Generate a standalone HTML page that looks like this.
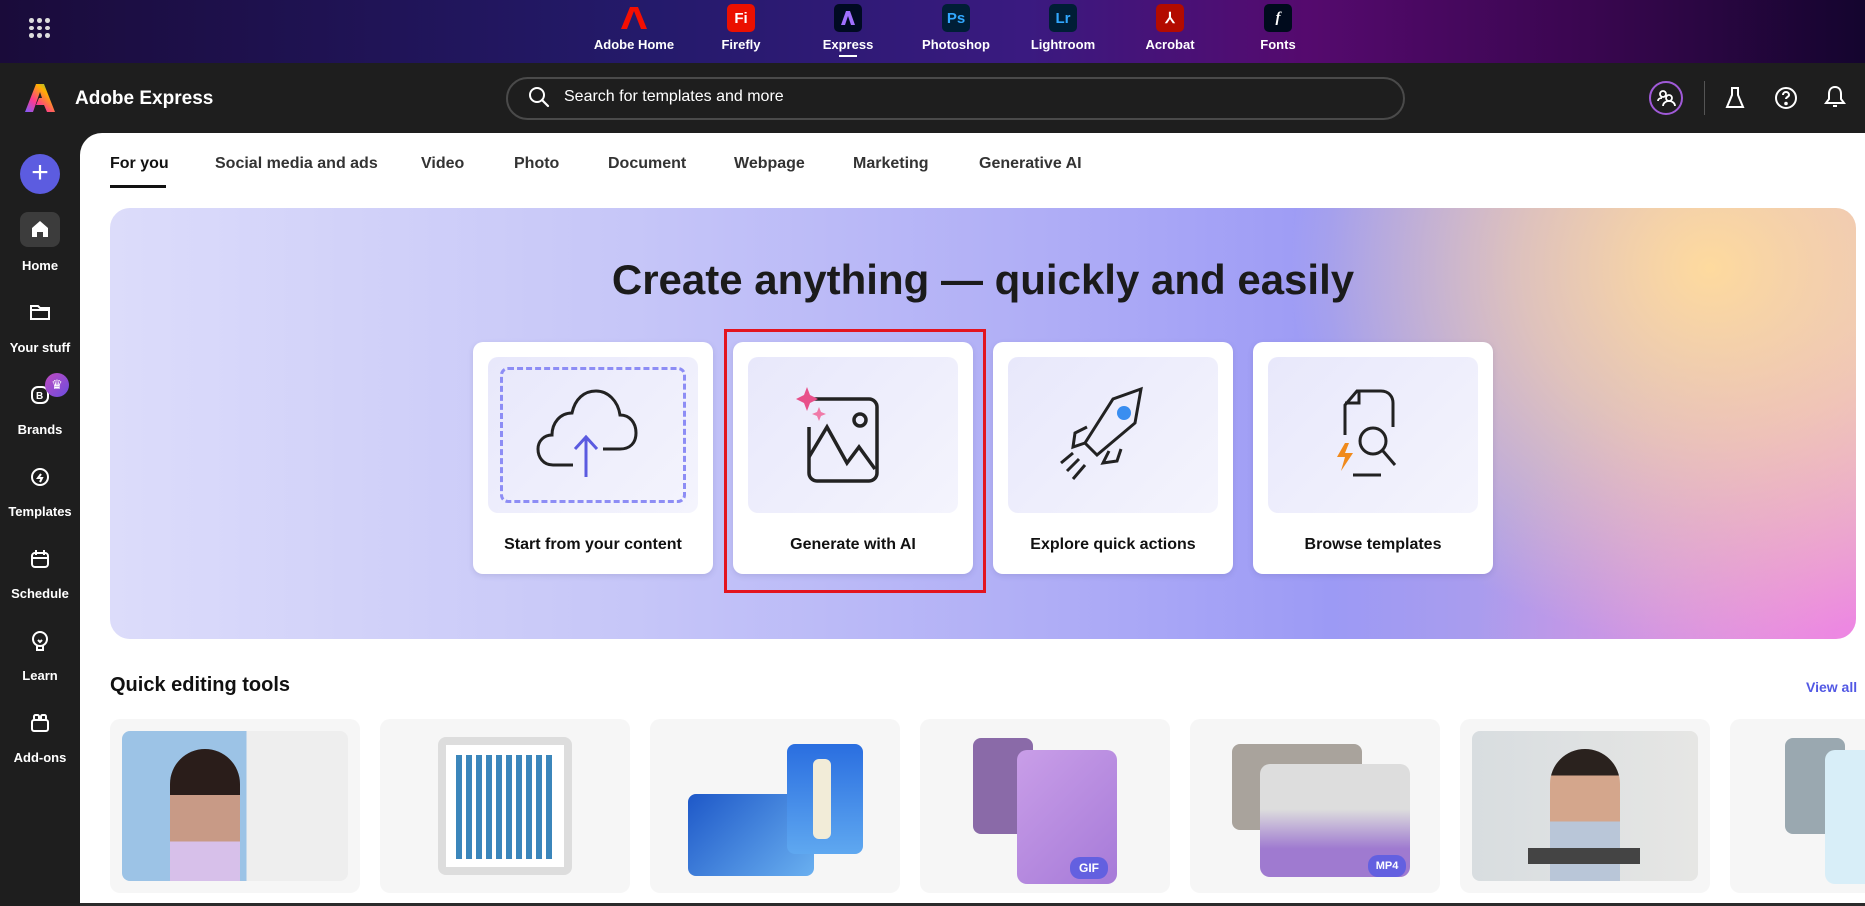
<!DOCTYPE html>
<html><head><meta charset="utf-8"><style>
*{box-sizing:border-box;margin:0;padding:0}
body{width:1865px;height:906px;overflow:hidden;background:#1e1e1e;font-family:"Liberation Sans",sans-serif;position:relative}
.abs{position:absolute}
.top{left:0;top:0;width:1865px;height:63px;background:linear-gradient(90deg,#1a0b3a 0%,#241a6b 35%,#3a1a80 55%,#550a6e 70%,#3a0650 85%,#14052e 100%)}
.app{position:absolute;top:4px;width:100px;margin-left:-50px;text-align:center;color:#fff;font-size:13px;font-weight:bold}
.app .ic{width:28px;height:28px;border-radius:5px;margin:0 auto 5px;display:flex;align-items:center;justify-content:center;font-size:15px;font-weight:bold}
.hdr{left:0;top:63px;width:1865px;height:70px;background:#1e1e1e}
.side{left:0;top:133px;width:80px;height:773px;background:#1e1e1e}
.main{left:80px;top:133px;width:1785px;height:770px;background:#fff;border-top-left-radius:22px}
.nav{position:absolute;left:0;width:80px;text-align:center;color:#fff;font-size:13px;font-weight:bold}
.tab{position:absolute;top:155px;font-size:16px;color:#333;font-weight:bold}
.hero{left:110px;top:208px;width:1746px;height:431px;border-radius:20px;
background:radial-gradient(ellipse 420px 380px at 1600px 60px,rgba(254,218,158,1),rgba(254,218,158,.6) 45%,rgba(254,218,158,0) 100%),radial-gradient(ellipse 380px 320px at 100% 100%,rgba(238,134,226,1),rgba(238,134,226,.5) 50%,rgba(238,134,226,0) 100%),linear-gradient(90deg,#dcdcfa 0%,#c6c6f8 30%,#aeacf6 55%,#9c9af5 70%,#b49ee8 85%,#d8b0d8 100%)}
.card{position:absolute;top:342px;width:240px;height:232px;background:#fff;border-radius:10px;box-shadow:0 2px 6px rgba(60,60,120,.15)}
.card .im{position:absolute;left:15px;top:15px;width:210px;height:156px;border-radius:10px;background:linear-gradient(135deg,#e8e8fb,#f4f4fd)}
.card .lb{position:absolute;left:0;right:0;top:194px;text-align:center;font-size:16px;font-weight:bold;color:#111}
.tile{position:absolute;top:719px;width:250px;height:174px;background:#f6f6f6;border-radius:10px;overflow:hidden}
</style></head><body>
<div class="abs top"></div>
<div class="abs" style="left:29px;top:18px;width:20px;height:20px;display:grid;grid-template-columns:repeat(3,5px);gap:3px">
<i style="background:#ddd;border-radius:50%"></i><i style="background:#ddd;border-radius:50%"></i><i style="background:#ddd;border-radius:50%"></i><i style="background:#ddd;border-radius:50%"></i><i style="background:#ddd;border-radius:50%"></i><i style="background:#ddd;border-radius:50%"></i><i style="background:#ddd;border-radius:50%"></i><i style="background:#ddd;border-radius:50%"></i><i style="background:#ddd;border-radius:50%"></i></div>
<div class="app" style="left:634px"><div class="ic" style="background:none"><svg width="26" height="26" viewBox="0 0 26 26"><path d="M9 2h8l9 22h-6L13 6 6 24H0z" fill="#f40f02"/></svg></div>Adobe Home</div>
<div class="app" style="left:741px"><div class="ic" style="background:#eb1000;color:#fff">Fi</div>Firefly</div>
<div class="app" style="left:848px"><div class="ic" style="background:#000a22"><svg width="16" height="16" viewBox="0 0 16 16"><path d="M6 1h4l5 14h-4L8 6 5 15H1z" fill="#a070ff"/></svg></div>Express<div style="width:18px;height:2px;background:#fff;margin:3px auto 0"></div></div>
<div class="app" style="left:956px"><div class="ic" style="background:#001e36;color:#31a8ff">Ps</div>Photoshop</div>
<div class="app" style="left:1063px"><div class="ic" style="background:#001e36;color:#31a8ff">Lr</div>Lightroom</div>
<div class="app" style="left:1170px"><div class="ic" style="background:#b30b00;color:#fff">⅄</div>Acrobat</div>
<div class="app" style="left:1278px"><div class="ic" style="background:#000b1d;color:#fff;font-style:italic;font-family:'Liberation Serif',serif">f</div>Fonts</div>

<div class="abs hdr"></div>
<svg class="abs" style="left:24px;top:82px" width="32" height="32" viewBox="0 0 32 32"><defs><linearGradient id="lg" x1="0" y1="1" x2="1" y2="0"><stop offset="0" stop-color="#7b5cff"/><stop offset=".35" stop-color="#ff3a8d"/><stop offset=".7" stop-color="#ffb000"/><stop offset="1" stop-color="#3cd070"/></linearGradient></defs><path d="M12 2h8l11 28h-8l-3-7h-8l3-7 3 0-2-6-7 20H1z" fill="url(#lg)"/></svg>
<div class="abs" style="left:75px;top:88px;color:#fff;font-size:19px;font-weight:bold">Adobe Express</div>
<div class="abs" style="left:506px;top:77px;width:899px;height:43px;border:2px solid #4a4a4a;border-radius:22px"></div>
<svg class="abs" style="left:528px;top:86px" width="22" height="22" viewBox="0 0 22 22"><circle cx="9" cy="9" r="7" fill="none" stroke="#fff" stroke-width="2"/><path d="M14 14l6 6" stroke="#fff" stroke-width="2.2" stroke-linecap="round"/></svg>
<div class="abs" style="left:564px;top:88px;color:#fff;font-size:16px">Search for templates and more</div>
<div class="abs" style="left:1649px;top:81px;width:34px;height:34px;border-radius:50%;border:2px solid #a05ad8"></div>
<svg class="abs" style="left:1655px;top:87px" width="22" height="22" viewBox="0 0 22 22" fill="none" stroke="#fff" stroke-width="1.8"><circle cx="8" cy="7" r="3"/><circle cx="14" cy="11" r="3"/><path d="M8 19c0-3 3-5 6-5s6 2 6 5M3 14c0-2 2-3 4-3"/></svg>
<div class="abs" style="left:1704px;top:81px;width:1px;height:34px;background:#555"></div>
<svg class="abs" style="left:1724px;top:86px" width="22" height="24" viewBox="0 0 22 24" fill="none" stroke="#fff" stroke-width="2"><path d="M7 2h8M8 2v7L3 21h16L14 9V2"/></svg>
<svg class="abs" style="left:1774px;top:86px" width="24" height="24" viewBox="0 0 24 24" fill="none" stroke="#fff" stroke-width="2"><circle cx="12" cy="12" r="10"/><path d="M9 9a3 3 0 116 0c0 2-3 2-3 4"/><circle cx="12" cy="17.5" r=".8" fill="#fff"/></svg>
<svg class="abs" style="left:1824px;top:84px" width="22" height="26" viewBox="0 0 22 26" fill="none" stroke="#fff" stroke-width="2"><path d="M11 3c-4 0-6 3-6 7v5l-3 4h18l-3-4v-5c0-4-2-7-6-7zM9 22h4"/></svg>

<div class="abs side"></div>
<div class="abs main"></div>
<div class="abs" style="left:20px;top:154px;width:40px;height:40px;border-radius:50%;background:#5c5ce0;color:#fff;font-size:30px;text-align:center;line-height:38px">+</div>
<div class="abs" style="left:20px;top:212px;width:40px;height:35px;border-radius:8px;background:#3c3c3c"></div>
<svg class="abs" style="left:30px;top:219px" width="20" height="20" viewBox="0 0 20 20"><path d="M2 9L10 2l8 7v9h-5v-5H7v5H2z" fill="#fff"/></svg>
<div class="nav" style="top:258px">Home</div>
<svg class="abs" style="left:29px;top:302px" width="22" height="20" viewBox="0 0 22 20" fill="none" stroke="#fff" stroke-width="2"><path d="M2 4h7l2 2h9v11H2zM2 8h18"/></svg>
<div class="nav" style="top:340px">Your stuff</div>
<svg class="abs" style="left:29px;top:384px" width="22" height="22" viewBox="0 0 22 22" fill="none" stroke="#fff" stroke-width="2"><rect x="3" y="3" width="16" height="16" rx="6"/><text x="7" y="15" font-size="10" fill="#fff" stroke="none" font-weight="bold" font-family="Liberation Sans">B</text></svg>
<div class="abs" style="left:45px;top:373px;width:24px;height:24px;border-radius:50%;background:linear-gradient(135deg,#c04bbf,#6a4ce0);color:#fff;font-size:13px;text-align:center;line-height:24px">♛</div>
<div class="nav" style="top:422px">Brands</div>
<svg class="abs" style="left:29px;top:466px" width="22" height="22" viewBox="0 0 22 22" fill="none" stroke="#fff" stroke-width="2"><circle cx="11" cy="11" r="8"/><path d="M12 8l-3 4h4l-2 4"/></svg>
<div class="nav" style="top:504px">Templates</div>
<svg class="abs" style="left:29px;top:548px" width="22" height="22" viewBox="0 0 22 22" fill="none" stroke="#fff" stroke-width="2"><rect x="3" y="5" width="16" height="14" rx="3"/><path d="M7 2v5M15 2v5M3 10h16"/></svg>
<div class="nav" style="top:586px">Schedule</div>
<svg class="abs" style="left:29px;top:630px" width="22" height="24" viewBox="0 0 22 24" fill="none" stroke="#fff" stroke-width="2"><circle cx="11" cy="9" r="7"/><path d="M8 16v4h6v-4M9 10l2 2 2-2"/></svg>
<div class="nav" style="top:668px">Learn</div>
<svg class="abs" style="left:29px;top:712px" width="22" height="22" viewBox="0 0 22 22" fill="none" stroke="#fff" stroke-width="2"><rect x="3" y="8" width="16" height="11" rx="2"/><rect x="5" y="3" width="5" height="5" rx="1.5"/><rect x="12" y="3" width="5" height="5" rx="1.5"/></svg>
<div class="nav" style="top:750px">Add-ons</div>

<div class="tab" style="left:110px;color:#111">For you</div>
<div class="abs" style="left:110px;top:185px;width:56px;height:3px;background:#111"></div>
<div class="tab" style="left:215px">Social media and ads</div>
<div class="tab" style="left:421px">Video</div>
<div class="tab" style="left:514px">Photo</div>
<div class="tab" style="left:608px">Document</div>
<div class="tab" style="left:734px">Webpage</div>
<div class="tab" style="left:853px">Marketing</div>
<div class="tab" style="left:979px">Generative AI</div>

<div class="abs hero"></div>
<div class="abs" style="left:110px;width:1746px;top:256px;text-align:center;font-size:42px;font-weight:bold;color:#1b1b1b">Create anything — quickly and easily</div>

<div class="card" style="left:473px"><div class="im"><div style="position:absolute;left:12px;top:10px;width:186px;height:136px;border:3px dashed #8d8df5;border-radius:8px"></div>
<svg style="position:absolute;left:45px;top:30px" width="120" height="100" viewBox="0 0 120 100" fill="none" stroke-width="3"><path d="M40 78H20C10 78 5 70 5 62s6-14 14-14c0-12 8-22 20-22 3-14 12-22 24-22s22 10 24 24c10 0 16 8 16 18s-6 16-16 16H70" stroke="#222"/><path d="M53 90V50M42 62l11-12 11 12" stroke="#5a5ae0"/></svg></div><div class="lb">Start from your content</div></div>
<div class="card" style="left:733px"><div class="im">
<svg style="position:absolute;left:45px;top:30px" width="120" height="100" viewBox="0 0 120 100" fill="none" stroke="#222" stroke-width="3.5"><path d="M20 12h56a8 8 0 018 8v66a8 8 0 01-8 8H24a8 8 0 01-8-8V40"/><circle cx="67" cy="33" r="6"/><path d="M16 70l18-30 20 36 12-16 16 22"/><path d="M14 0l3 8 8 4-8 4-3 8-3-8-8-4 8-4z" fill="#e8508a" stroke="none"/><path d="M26 20l2 5 5 2-5 2-2 5-2-5-5-2 5-2z" fill="#f07aa8" stroke="none"/></svg></div><div class="lb">Generate with AI</div></div>
<div class="card" style="left:993px"><div class="im">
<svg style="position:absolute;left:45px;top:28px" width="120" height="100" viewBox="0 0 120 100" fill="none" stroke="#222" stroke-width="3"><path d="M88 4L60 14 32 58 44 70 82 38z"/><circle cx="71" cy="28" r="7" fill="#3a8ef0" stroke="none"/><path d="M34 42l-12 6-2 14 12-4M56 66l-6 12 14-2 4-12M26 74L14 86M32 80L20 94M20 68L8 78"/></svg></div><div class="lb">Explore quick actions</div></div>
<div class="card" style="left:1253px"><div class="im">
<svg style="position:absolute;left:45px;top:28px" width="120" height="100" viewBox="0 0 120 100" fill="none" stroke="#222" stroke-width="3"><path d="M32 50V20L44 6h24c8 0 12 6 12 12v24M32 18h14V6M40 90h28"/><circle cx="60" cy="56" r="13"/><path d="M70 66l12 14"/><path d="M32 58l-8 14h8l-4 14 12-18h-8l4-10z" fill="#f08a1c" stroke="none"/></svg></div><div class="lb">Browse templates</div></div>
<div class="abs" style="left:724px;top:329px;width:262px;height:264px;border:3px solid #e3141f"></div>

<div class="abs" style="left:110px;top:674px;font-size:20px;font-weight:bold;color:#111">Quick editing tools</div>
<div class="abs" style="left:1806px;top:679px;font-size:14px;font-weight:bold;color:#5258e4">View all</div>

<div class="tile" style="left:110px"><div style="position:absolute;left:12px;top:12px;width:226px;height:150px;border-radius:8px;background:linear-gradient(90deg,#9cc3e6 0 55%,#eee 55%)"></div><div style="position:absolute;left:60px;top:30px;width:70px;height:132px;border-radius:35px 35px 0 0;background:linear-gradient(#2a1d1a 0 35%,#c89a86 35% 70%,#d7c0ea 70%)"></div></div>
<div class="tile" style="left:380px"><div style="position:absolute;left:58px;top:18px;width:134px;height:138px;border-radius:8px;background:#ddd"></div><div style="position:absolute;left:66px;top:26px;width:118px;height:122px;background:#fff"></div><div style="position:absolute;left:76px;top:36px;width:98px;height:104px;background:repeating-linear-gradient(90deg,#1a72b0 0 6px,#fff 6px 10px),#1a72b0;opacity:.85"></div></div>
<div class="tile" style="left:650px"><div style="position:absolute;left:38px;top:75px;width:126px;height:82px;border-radius:8px;background:linear-gradient(135deg,#1e58c8,#6ab0f0)"></div><div style="position:absolute;left:137px;top:25px;width:76px;height:110px;border-radius:8px;background:linear-gradient(#2a6ee0,#5fa8f0)"></div><div style="position:absolute;left:163px;top:40px;width:18px;height:80px;border-radius:6px;background:#f2ecd8"></div></div>
<div class="tile" style="left:920px"><div style="position:absolute;left:53px;top:19px;width:60px;height:96px;border-radius:8px;background:#8a6aa8"></div><div style="position:absolute;left:97px;top:31px;width:100px;height:134px;border-radius:10px;background:linear-gradient(135deg,#c99ee8,#a67ad8)"></div><div style="position:absolute;left:150px;top:138px;width:38px;height:22px;border-radius:10px;background:#6360e0;color:#fff;font-size:12px;font-weight:bold;text-align:center;line-height:22px">GIF</div></div>
<div class="tile" style="left:1190px"><div style="position:absolute;left:42px;top:25px;width:130px;height:86px;border-radius:8px;background:#a9a39c"></div><div style="position:absolute;left:70px;top:45px;width:150px;height:113px;border-radius:10px;background:linear-gradient(#ddd 0 40%,#9f7ad0 75%)"></div><div style="position:absolute;left:178px;top:136px;width:38px;height:22px;border-radius:10px;background:#6360e0;color:#fff;font-size:11px;font-weight:bold;text-align:center;line-height:22px">MP4</div></div>
<div class="tile" style="left:1460px"><div style="position:absolute;left:12px;top:12px;width:226px;height:150px;border-radius:8px;background:linear-gradient(90deg,#d8dde0,#e6e6e4)"></div><div style="position:absolute;left:90px;top:30px;width:70px;height:132px;border-radius:35px 35px 0 0;background:linear-gradient(#2a221e 0 20%,#d4a68c 20% 55%,#b9c6d8 55%)"></div><div style="position:absolute;left:68px;top:129px;width:112px;height:16px;background:#444"></div></div>
<div class="tile" style="left:1730px"><div style="position:absolute;left:55px;top:19px;width:60px;height:96px;border-radius:8px;background:#9aa8b0"></div><div style="position:absolute;left:95px;top:31px;width:60px;height:134px;border-radius:10px;background:#d8eef8"></div></div>
<div class="abs" style="left:80px;top:903px;width:1785px;height:3px;background:#2b2b2b"></div>
</body></html>
